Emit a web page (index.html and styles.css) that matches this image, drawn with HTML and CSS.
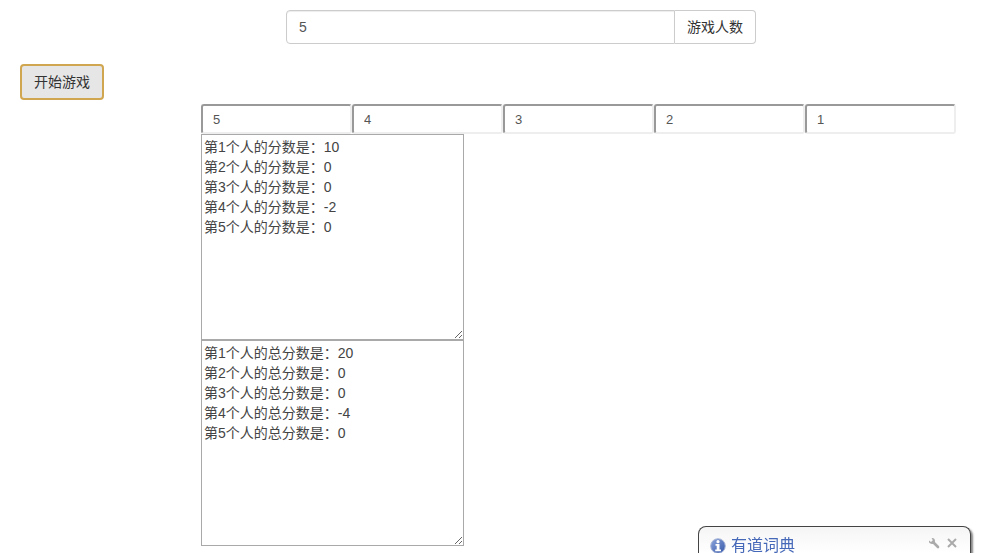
FILE: index.html
```
<!DOCTYPE html>
<html lang="zh-CN">
<head>
    <meta charset="UTF-8">
    <meta name="viewport" content="width=device-width, initial-scale=1.0">
    <title>游戏</title>
    <link rel="stylesheet" href="styles.css">
</head>
<body>

<div class="container">
    <!-- Number of players -->
    <div class="input-row">
        <div class="input-group">
            <input type="text" id="playerCount" class="form-control" value="5">
            <label for="playerCount" class="input-addon">游戏人数</label>
        </div>
    </div>

    <button type="button" class="btn-start">开始游戏</button>

    <!-- Numbers and scores -->
    <div class="game">
        <div class="numbers">
            <input type="text" class="number" aria-label="1" value="5">
            <input type="text" class="number" aria-label="2" value="4">
            <input type="text" class="number" aria-label="3" value="3">
            <input type="text" class="number" aria-label="4" value="2">
            <input type="text" class="number" aria-label="5" value="1">
        </div>
        <textarea class="score" aria-label="分数" rows="10">第1个人的分数是：10
第2个人的分数是：0
第3个人的分数是：0
第4个人的分数是：-2
第5个人的分数是：0</textarea>
        <textarea class="score" aria-label="总分数" rows="10">第1个人的总分数是：20
第2个人的总分数是：0
第3个人的总分数是：0
第4个人的总分数是：-4
第5个人的总分数是：0</textarea>
    </div>
</div>

<!-- Dictionary popup -->
<div class="popup">
    <svg class="popup-info" viewBox="0 0 16 16" width="16" height="16">
        <defs>
            <linearGradient id="ball" x1="0" y1="0" x2="1" y2="1">
                <stop offset="0" stop-color="#8ea6dc"/>
                <stop offset="1" stop-color="#3457a8"/>
            </linearGradient>
        </defs>
        <circle cx="8" cy="8" r="7.3" fill="url(#ball)" stroke="#a9b6d8" stroke-width="1"/>
        <circle cx="8" cy="3.7" r="1.6" fill="#fff"/>
        <path d="M5.500 6h4v5.500H11V13.200H5.200v-1.700H6.700V7.700H5.500z" fill="#fff"/>
    </svg>
    <span class="popup-title">有道词典</span>
    <div class="popup-tools">
        <button type="button" class="popup-btn" aria-label="设置">
            <svg viewBox="0 0 12 12" width="12" height="12">
                <path d="M5.500 5.500L10 10" stroke="#aaa" stroke-width="2.600" stroke-linecap="round"/>
                <path d="M3.600 1A3 3 0 1 1 1 3.600L3 5 4.800 3.200z" fill="#aaa"/>
            </svg>
        </button>
        <button type="button" class="popup-btn" aria-label="关闭">
            <svg viewBox="0 0 12 12" width="12" height="12">
                <path d="M2 2l8 8M10 2l-8 8" stroke="#aaa" stroke-width="2"/>
            </svg>
        </button>
    </div>
</div>

</body>
</html>
```

FILE: styles.css
```
* {
    box-sizing: border-box;
}
body {
    margin: 0;
    background-color: #fff;
    color: #333;
    font-family: "Liberation Sans", "Noto Sans CJK SC", sans-serif;
    font-size: 14px;
    line-height: 20px;
}
input, button, textarea {
    font-family: inherit;
    font-size: inherit;
    line-height: inherit;
}
.container {
    padding: 10px 20px 0;
}
.input-row {
    display: flex;
    justify-content: center;
    padding-left: 53px;
    margin-bottom: 20px;
}
.input-group {
    display: flex;
    width: 100%;
    max-width: 470px;
}
.form-control {
    flex: 1;
    min-width: 0;
    height: 34px;
    padding: 6px 12px;
    border: 1px solid #ccc;
    border-radius: 4px 0 0 4px;
    box-shadow: inset 0 1px 1px rgba(0, 0, 0, 0.075);
    color: #555;
}
.input-addon {
    padding: 6px 12px;
    border: 1px solid #ccc;
    border-left: none;
    border-radius: 0 4px 4px 0;
}
.btn-start {
    display: block;
    height: 36px;
    padding: 6px 12px;
    border: 2px solid #d0a650;
    border-radius: 4px;
    background-color: #e6e6e6;
    color: #333;
    cursor: pointer;
}
.game {
    margin: 4px 13px 0 181px;
}
.numbers {
    display: flex;
}
.number {
    flex: 1;
    min-width: 0;
    height: 30px;
    padding: 0 10px;
    border: 2px solid;
    border-color: #999 #eee #eee #999;
    border-radius: 3px;
    color: #555;
    font-size: 13px;
}
.score {
    display: block;
    width: 263px;
    padding: 2px;
    border: 1px solid #a9a9a9;
    color: #444;
}
.popup {
    position: fixed;
    right: 18px;
    bottom: 0;
    display: flex;
    align-items: center;
    width: 273px;
    height: 27px;
    padding: 12px 12px 0 11px;
    border: 1px solid #444;
    border-bottom: none;
    border-radius: 8px 8px 0 0;
    background: linear-gradient(#f5f5f5, #fff);
    box-shadow: 2px 2px 2px #888;
}
.popup-info {
    flex: none;
    margin-right: 5px;
}
.popup-title {
    flex: 1;
    color: #4668b8;
    font-size: 16px;
}
.popup-tools {
    display: flex;
    gap: 6px;
    padding-bottom: 6px;
}
.popup-btn {
    display: flex;
    padding: 0;
    border: none;
    background: none;
    cursor: pointer;
}
```
